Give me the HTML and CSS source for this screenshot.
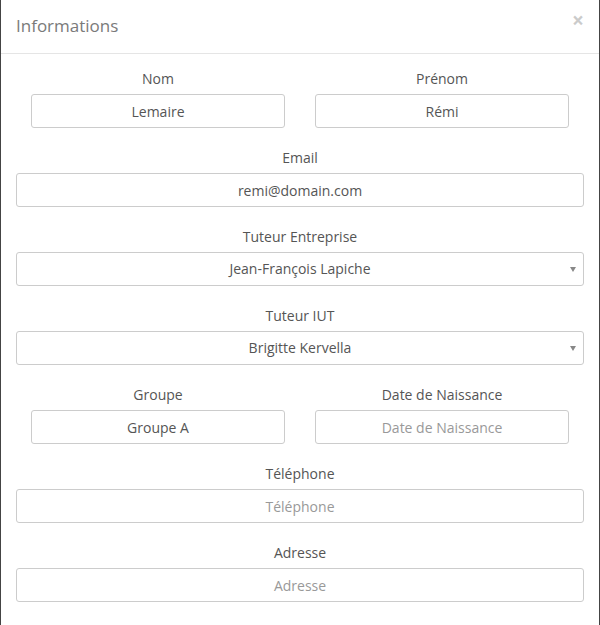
FILE: index.html
```html
<!DOCTYPE html>
<html lang="fr">
<head>
<meta charset="utf-8">
<title>Informations</title>
<link rel="stylesheet" href="styles.css">
</head>
<body>
<div class="modal">
  <div class="modal-header">
    <h4 class="modal-title">Informations</h4>
    <button class="close" type="button" aria-label="Fermer">×</button>
  </div>
  <form class="modal-body">
    <div class="row">
      <div class="form-group col">
        <label for="nom">Nom</label>
        <input id="nom" class="form-control" type="text" value="Lemaire" placeholder="Nom">
      </div>
      <div class="form-group col">
        <label for="prenom">Prénom</label>
        <input id="prenom" class="form-control" type="text" value="Rémi" placeholder="Prénom">
      </div>
    </div>
    <div class="form-group">
      <label for="email">Email</label>
      <input id="email" class="form-control" type="email" value="remi@domain.com" placeholder="Email">
    </div>
    <div class="form-group">
      <label for="tent">Tuteur Entreprise</label>
      <div class="select-wrap">
        <select id="tent" class="form-control">
          <option>Jean-François Lapiche</option>
        </select>
      </div>
    </div>
    <div class="form-group">
      <label for="tiut">Tuteur IUT</label>
      <div class="select-wrap">
        <select id="tiut" class="form-control">
          <option>Brigitte Kervella</option>
        </select>
      </div>
    </div>
    <div class="row">
      <div class="form-group col">
        <label for="groupe">Groupe</label>
        <input id="groupe" class="form-control" type="text" value="Groupe A" placeholder="Groupe">
      </div>
      <div class="form-group col">
        <label for="naiss">Date de Naissance</label>
        <input id="naiss" class="form-control" type="text" placeholder="Date de Naissance">
      </div>
    </div>
    <div class="form-group">
      <label for="tel">Téléphone</label>
      <input id="tel" class="form-control" type="text" placeholder="Téléphone">
    </div>
    <div class="form-group">
      <label for="adr">Adresse</label>
      <input id="adr" class="form-control" type="text" placeholder="Adresse">
    </div>
  </form>
</div>
</body>
</html>
```

FILE: styles.css
```css
html, body {
  margin: 0;
  padding: 0;
  height: 625px;
  overflow: hidden;
  background: #3b3b3b;
}

body {
  font-family: "Open Sans", "Liberation Sans", sans-serif;
  font-size: 14px;
  line-height: 20px;
  color: #555;
}

.modal {
  background: #fff;
  border-left: 1px solid #444;
  border-right: 1px solid #444;
  min-height: 625px;
  box-sizing: border-box;
}

.modal-header {
  display: flex;
  align-items: flex-start;
  justify-content: space-between;
  padding: 13px 15px 15px;
  border-bottom: 1px solid #e5e5e5;
}

.modal-title {
  margin: 0;
  font-size: 17px;
  font-weight: 400;
  line-height: 25px;
  color: #7a7a7a;
}

.close {
  margin: -3px 0 0;
  padding: 0;
  border: 0;
  background: transparent;
  font-family: "Open Sans", "Liberation Sans", sans-serif;
  font-size: 21px;
  font-weight: 700;
  line-height: 21px;
  color: #000;
  opacity: 0.2;
  cursor: pointer;
}

.modal-body {
  display: block;
  padding: 15px;
  margin: 0;
}

.row {
  display: flex;
}

.col {
  flex: 1 1 0;
  padding: 0 15px;
  min-width: 0;
}

.form-group {
  margin-bottom: 20px;
  text-align: center;
}

label {
  display: block;
  margin-bottom: 5px;
  font-weight: 400;
  color: #555;
}

.form-control {
  display: block;
  width: 100%;
  height: 34px;
  box-sizing: border-box;
  padding: 6px 12px;
  font-family: "Open Sans", "Liberation Sans", sans-serif;
  font-size: 14px;
  line-height: 20px;
  color: #555;
  background: #fff;
  border: 1px solid #ccc;
  border-radius: 3px;
  text-align: center;
  text-align-last: center;
  outline: none;
  margin: 0;
}

.form-control::placeholder {
  color: #999;
  opacity: 1;
}

select.form-control {
  -webkit-appearance: none;
  appearance: none;
  padding-right: 12px;
}

.select-wrap {
  position: relative;
}

.select-wrap::after {
  content: "";
  position: absolute;
  right: 8px;
  top: 15px;
  width: 0;
  height: 0;
  border-left: 3.5px solid transparent;
  border-right: 3.5px solid transparent;
  border-top: 5px solid #888;
  pointer-events: none;
}
```
